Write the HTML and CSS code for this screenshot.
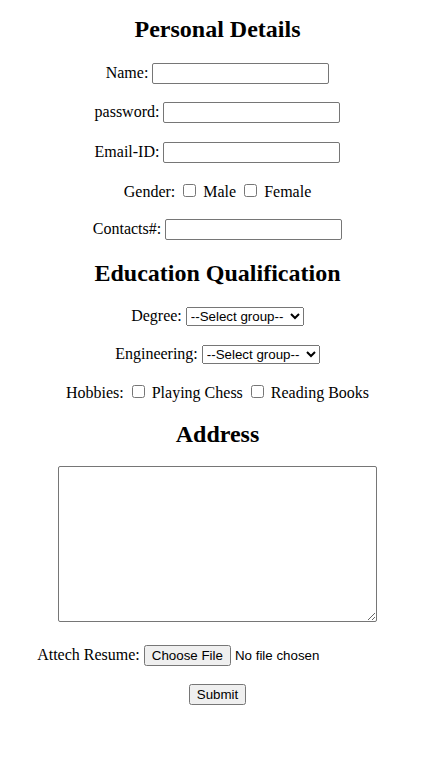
FILE: index.html
```html
<!DOCTYPE html>
<html>
<head>
<meta charset="utf-8">
<title>Form</title>
<link rel="stylesheet" href="styles.css">
</head>
<body class="page">
<form class="form">
<h2 class="title first">Personal Details</h2>
<div class="row">Name: <input type="text" class="field"></div>
<div class="row">password: <input type="password" class="field"></div>
<div class="row">Email-ID: <input type="email" class="field"></div>
<div class="row">Gender: <input type="checkbox" class="check"> Male <input type="checkbox" class="check"> Female</div>
<div class="row">Contacts#: <input type="text" class="field"></div>
<h2 class="title">Education Qualification</h2>
<div class="row">Degree: <select class="pick"><option>--Select group--</option></select></div>
<div class="row">Engineering: <select class="pick"><option>--Select group--</option></select></div>
<div class="row">Hobbies: <input type="checkbox" class="check"> Playing Chess <input type="checkbox" class="check"> Reading Books</div>
<h2 class="title addr">Address</h2>
<div class="row"><textarea class="area" rows="10" cols="40"></textarea></div>
<div class="row">Attech Resume: <input type="file" class="file"></div>
<div class="row"><input type="submit" value="Submit" class="btn"></div>
</form>
</body>
</html>
```
FILE: styles.css
```css
.page {
  margin: 16px 14px 8px 8px;
  font-family: "Liberation Serif", "Times New Roman", serif;
  font-size: 16px;
  color: #000;
  background: #fff;
  text-align: center;
}
.form { margin: 0; }
.title {
  font-size: 24px;
  font-weight: bold;
  margin: 19.92px 0;
}
.title.first { margin-top: 0; }
.title.addr { margin-top: 19px; margin-bottom: 17.5px; }
.row { margin: 18.4px 0; }
.field {
  font-family: "Liberation Sans", Arial, sans-serif;
  font-size: 13.33px;
  width: 169px;
  height: 15px;
  padding: 2px 3px;
  border: 1px solid #767676;
  border-radius: 2px;
  box-sizing: content-box;
  margin: 0;
}
.check {
  width: 13px;
  height: 13px;
  margin: 3px 3px 3px 4px;
}
.pick {
  font-family: "Liberation Sans", Arial, sans-serif;
  font-size: 13.33px;
  width: 118px;
  height: 19px;
  margin: 0;
}
.area {
  width: 313px;
  height: 150px;
  padding: 2px;
  margin: 0;
  border: 1px solid #767676;
  border-radius: 2px;
}
.file {
  font-family: "Liberation Sans", Arial, sans-serif;
  font-size: 13.33px;
  width: 254px;
  margin: 0;
}
.btn {
  font-family: "Liberation Sans", Arial, sans-serif;
  font-size: 13.33px;
  margin: 0;
}
```
